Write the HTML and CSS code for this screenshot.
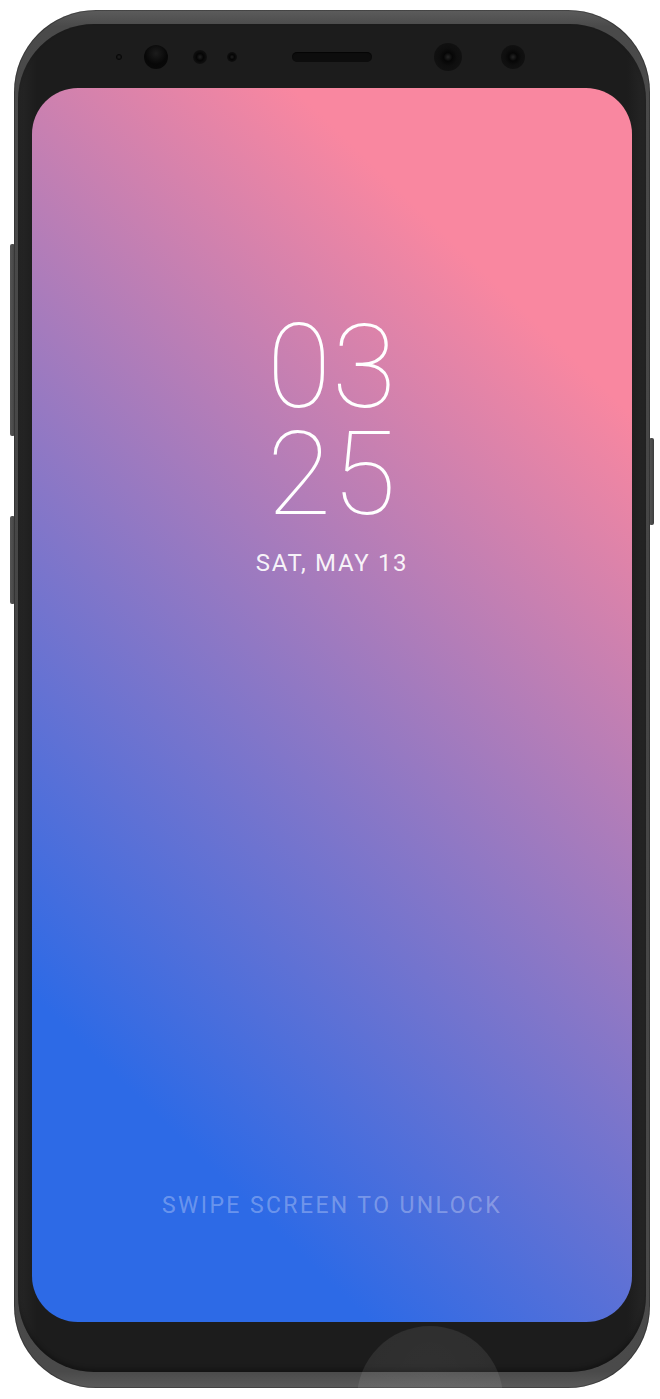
FILE: index.html
```html
<!DOCTYPE html>
<html>
<head>
<meta charset="utf-8">
<link rel="stylesheet" href="styles.css">
</head>
<body>
<div class="device">
  <div class="btn btn-l1"></div>
  <div class="btn btn-l2"></div>
  <div class="btn btn-r1"></div>
  <div class="phone">
    <div class="face">
      <div class="sensors">
        <span class="dot dot-a"></span>
        <span class="dot dot-cam"></span>
        <span class="dot dot-b"></span>
        <span class="dot dot-c"></span>
        <span class="speaker"></span>
        <span class="dot dot-d"></span>
        <span class="dot dot-e"></span>
      </div>
      <div class="screen">
        <div class="clock">
          <div class="time">03<br>25</div>
          <div class="date">SAT, MAY 13</div>
        </div>
        <div class="swipe">SWIPE SCREEN TO UNLOCK</div>
      </div>
    </div>
    <div class="home"></div>
  </div>
</div>
</body>
</html>
```

FILE: styles.css
```css
html, body {
  margin: 0;
  padding: 0;
  background: #ffffff;
}
body {
  width: 660px;
  height: 1399px;
  overflow: hidden;
  font-family: Roboto, "Liberation Sans", sans-serif;
}
.device {
  position: relative;
  width: 636px;
  height: 1378px;
  margin: 10px 0 0 14px;
}
.btn {
  position: absolute;
  width: 5px;
  background: linear-gradient(90deg, #555 0%, #4a4a4a 60%, #3c3c3c 100%);
  border-radius: 2px;
}
.btn-l1 { left: -4px; top: 234px; height: 192px; }
.btn-l2 { left: -4px; top: 506px; height: 88px; }
.btn-r1 { right: -4px; top: 428px; height: 87px; }
.phone {
  position: relative;
  width: 636px;
  height: 1378px;
  border-radius: 82px;
  background: linear-gradient(180deg, #5c5c5c 0%, #4a4a4a 1.2%, #454545 50%, #4a4a4a 98.8%, #5a5a5a 100%);
  box-shadow: inset 0 0 0 1px rgba(0,0,0,0.25);
  padding: 14px 4px 16px 4px;
  box-sizing: border-box;
  overflow: hidden;
}
.face {
  height: 100%;
  border-radius: 76px;
  background: linear-gradient(90deg, #262626 0%, #1c1c1c 3%, #1c1c1c 97%, #262626 100%);
  box-shadow: inset 0 -3px 4px rgba(0,0,0,0.3);
  display: flex;
  flex-direction: column;
  align-items: center;
}
.sensors {
  align-self: stretch;
  height: 64px;
  display: flex;
  align-items: center;
  padding-top: 2px;
  box-sizing: border-box;
}
.dot {
  display: block;
  border-radius: 50%;
  flex: none;
}
.dot-a { width: 6px; height: 6px; margin-left: 98px; background: radial-gradient(circle, #222 0%, #080808 60%, #141414 100%); }
.dot-cam { width: 24px; height: 24px; margin-left: 22px; background: radial-gradient(circle at 50% 35%, #1c1c1c 0%, #070707 55%, #0a0a0a 100%); }
.dot-b { width: 14px; height: 14px; margin-left: 25px; background: radial-gradient(circle, #202020 0%, #050505 35%, #0d0d0d 60%, #151515 100%); }
.dot-c { width: 10px; height: 10px; margin-left: 20px; background: radial-gradient(circle, #202020 0%, #050505 35%, #0d0d0d 60%, #151515 100%); }
.speaker {
  display: block;
  width: 80px;
  height: 10px;
  margin-left: 55px;
  border-radius: 5px;
  background: #0d0d0d;
  box-shadow: inset 0 1px 1px rgba(0,0,0,0.6);
  flex: none;
}
.dot-d { width: 28px; height: 28px; margin-left: 62px; background: radial-gradient(circle, #252525 0%, #060606 22%, #0e0e0e 45%, #121212 85%, #1a1a1a 100%); }
.dot-e { width: 24px; height: 24px; margin-left: 39px; background: radial-gradient(circle, #252525 0%, #060606 24%, #0e0e0e 48%, #121212 85%, #1a1a1a 100%); }
.screen {
  width: 600px;
  height: 1234px;
  border-radius: 46px;
  background: linear-gradient(44deg, #2d6ae6 18%, #f987a0 82%);
  display: flex;
  flex-direction: column;
  align-items: center;
  color: #ffffff;
}
.clock {
  margin-top: 226px;
  display: flex;
  flex-direction: column;
  align-items: center;
}
.time {
  font-family: Roboto, "Liberation Sans", sans-serif;
  font-weight: 100;
  font-size: 117px;
  line-height: 107px;
  letter-spacing: 1px;
  text-align: center;
  color: #ffffff;
}
.date {
  margin-top: 21px;
  font-size: 24px;
  line-height: 28px;
  letter-spacing: 1.7px;
  color: rgba(255,255,255,0.92);
}
.swipe {
  margin-top: auto;
  margin-bottom: 102px;
  font-size: 23px;
  line-height: 28px;
  letter-spacing: 2.4px;
  color: rgba(255,255,255,0.3);
}
.home {
  position: absolute;
  left: 343px;
  top: 1316px;
  width: 146px;
  height: 146px;
  border-radius: 50%;
  background: radial-gradient(circle at 50% 30%, rgba(255,255,255,0.09) 0%, rgba(255,255,255,0.08) 60%, rgba(255,255,255,0.07) 100%);
}
```
